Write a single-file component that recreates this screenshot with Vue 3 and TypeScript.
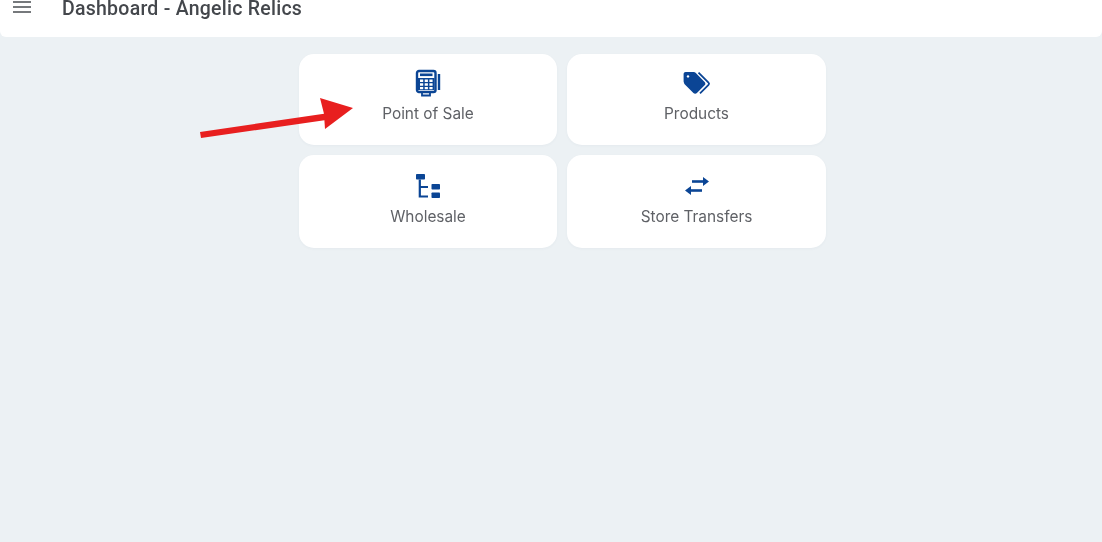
<script setup lang="ts">
const tiles = [
  { name: 'Point of Sale', icon: 'pos' },
  { name: 'Products', icon: 'tags' },
  { name: 'Wholesale', icon: 'tree' },
  { name: 'Store Transfers', icon: 'swap' }
]
</script>

<template>
  <div class="page">
    <header class="topbar">
      <button class="topbar__menu" type="button" aria-label="Menu">
        <svg width="18" height="14" viewBox="0 0 18 14" aria-hidden="true">
          <path d="M0 2h18M0 7h18M0 12h18" stroke="#4a4d52" stroke-width="1.7" fill="none" />
        </svg>
      </button>
      <h1 class="topbar__title">Dashboard - Angelic Relics</h1>
    </header>

    <main class="dashboard">
      <div class="tiles">
        <a v-for="tile in tiles" :key="tile.name" class="tile" :class="`tile--${tile.icon}`" href="#">
          <svg v-if="tile.icon === 'pos'" class="tile__icon" width="26" height="28" viewBox="0 0 26 28" aria-hidden="true">
            <rect x="2" y="2" width="18.500" height="21" rx="2" fill="none" stroke="#0b4595" stroke-width="2.400" />
            <rect x="5" y="4.500" width="12.500" height="2.600" fill="#0b4595" />
            <path d="M3 9h16.500v12H3z" fill="#0b4595" />
            <path d="M5 10.500h3.200v2.400H5zM9.700 10.500h3.200v2.400H9.700zM14.400 10.500h3.200v2.400h-3.200zM5 14.300h3.200v2.400H5zM9.700 14.300h3.200v2.400H9.700zM14.400 14.300h3.200v2.400h-3.200zM5 18h3.200v2.200H5zM9.700 18h3.200v2.200H9.700zM14.400 18h3.200v2.200h-3.200z" fill="#fff" />
            <rect x="22.800" y="5" width="2.400" height="16" fill="#0b4595" />
            <path d="M7 24v2.500h8V24" fill="none" stroke="#0b4595" stroke-width="1.800" />
          </svg>
          <svg v-else-if="tile.icon === 'tags'" class="tile__icon" width="28" height="24" viewBox="0 0 28 24" aria-hidden="true">
            <path d="M2.600 1h8.200c.7 0 1.300.3 1.800.8l9 9.100c1 1 1 2.500 0 3.400l-7.700 7.800c-1 1-2.500 1-3.500 0l-9-9.100C.9 11.500.6 10.900.6 10.200V3C.6 1.900 1.500 1 2.600 1z" fill="#0b4595" />
            <circle cx="5" cy="5.400" r="1.200" fill="#fff" />
            <path d="M15.500 1.600l10 10c.8.800.8 1.500 0 2.300l-8.500 8.500" fill="none" stroke="#0b4595" stroke-width="1.800" />
          </svg>
          <svg v-else-if="tile.icon === 'tree'" class="tile__icon" width="26" height="26" viewBox="0 0 26 26" aria-hidden="true">
            <rect x="1" y="1" width="9" height="5.500" rx=".8" fill="#0b4595" />
            <path d="M4.800 6.500V23.500h8.200M4.800 14h8.200" fill="none" stroke="#0b4595" stroke-width="2.200" />
            <rect x="16.500" y="11" width="8.500" height="5.500" rx=".8" fill="#0b4595" />
            <rect x="16.500" y="19.500" width="8.500" height="5.500" rx=".8" fill="#0b4595" />
          </svg>
          <svg v-else class="tile__icon" width="26" height="20" viewBox="0 0 26 20" aria-hidden="true">
            <path d="M8 5.500h13" stroke="#0b4595" stroke-width="2.600" fill="none" />
            <path d="M19 1l6 4.500-6 4.500z" fill="#0b4595" />
            <path d="M18 14.500H5" stroke="#0b4595" stroke-width="2.600" fill="none" />
            <path d="M7 10l-6 4.500L7 19z" fill="#0b4595" />
          </svg>
          <span class="tile__name">{{ tile.name }}</span>
        </a>
      </div>
    </main>

    <svg class="arrow" width="160" height="42" viewBox="0 0 160 42" aria-hidden="true">
      <path d="M0 35L124 16.800L120 1L153 11L125 32L124.400 23.200L1 41z" fill="#e81f1f" />
    </svg>
  </div>
</template>

<style>
html,
body {
  margin: 0;
  background: #ecf1f4;
}
</style>

<style scoped>
.page {
  position: relative;
  width: 1102px;
  height: 542px;
  overflow: hidden;
  background: #ecf1f4;
  font-family: "Inter", "Liberation Sans", sans-serif;
  filter: blur(0.35px);
}

.topbar {
  display: flex;
  align-items: flex-start;
  height: 37px;
  box-sizing: border-box;
  padding-left: 13px;
  background: #fff;
  border-radius: 0 0 6px 6px;
}

.topbar__menu {
  display: block;
  width: 18px;
  height: 14px;
  margin: 0 31px 0 0;
  padding: 0;
  border: 0;
  background: transparent;
  line-height: 0;
}

.topbar__title {
  margin: 0;
  font-family: "Roboto", "Liberation Sans", sans-serif;
  font-size: 19.5px;
  font-weight: 500;
  line-height: 18px;
  letter-spacing: 0.25px;
  color: #44474c;
  white-space: nowrap;
}

.dashboard {
  padding: 17px 0 0 299px;
}

.tiles {
  display: grid;
  grid-template-columns: 258px 259px;
  grid-template-rows: 91px 93px;
  gap: 10px;
}

.tile {
  display: flex;
  flex-direction: column;
  align-items: center;
  padding-top: 15px;
  box-sizing: border-box;
  border-radius: 15px;
  background: #fff;
  box-shadow: 0 1px 3px rgba(60, 80, 100, 0.04);
  text-decoration: none;
}

.tile--tree {
  padding-top: 18px;
}

.tile--swap {
  padding-top: 21px;
}

.tile__icon {
  display: block;
  flex-shrink: 0;
}

.tile__name {
  margin-top: 7px;
  font-size: 15.4px;
  line-height: 20px;
  color: #5f6166;
  white-space: nowrap;
}

.tile--tree .tile__name {
  margin-top: 8px;
}

.tile--swap .tile__name {
  margin-top: 11px;
}

.tile--tags .tile__name {
  margin-top: 9px;
}

.tile--tags .tile__icon {
  margin-top: 2px;
}

.arrow {
  position: absolute;
  left: 200px;
  top: 97px;
}
</style>
